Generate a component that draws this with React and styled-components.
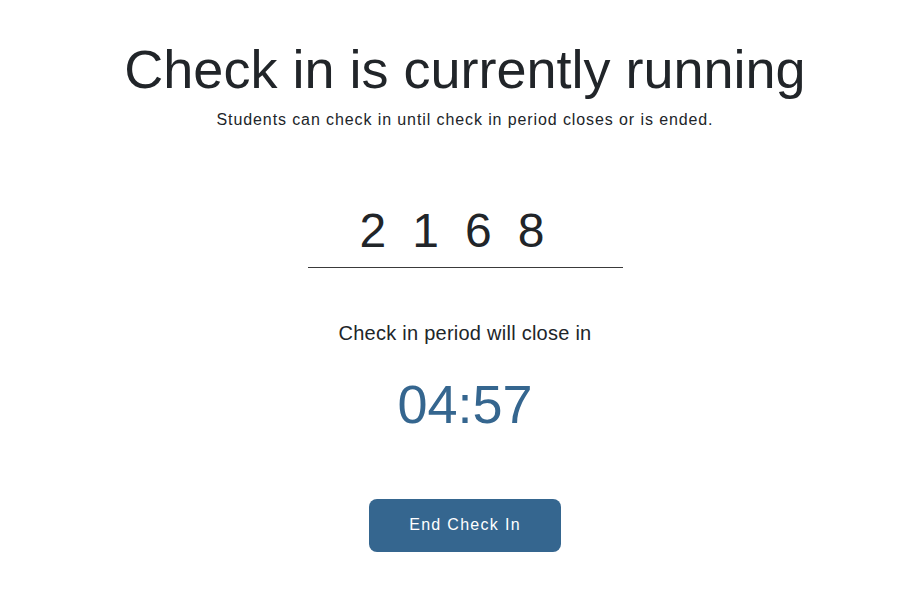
import React from "react";
import styled, { createGlobalStyle } from "styled-components";

const GlobalStyle = createGlobalStyle`
  body {
    margin: 0;
    background: #fff;
    font-family: "Liberation Sans", Arial, sans-serif;
    color: #212529;
  }
`;

const Page = styled.main`
  display: flex;
  flex-direction: column;
  align-items: center;
  padding: 37px 0 0 21px;
  text-align: center;
`;

const Title = styled.h1`
  margin: 0;
  font-size: 54px;
  font-weight: 400;
  line-height: 1.2;
`;

const Subtitle = styled.p`
  margin: 6px 0 0;
  font-size: 16px;
  letter-spacing: 0.9px;
  line-height: 1.5;
`;

const CodeField = styled.div`
  box-sizing: border-box;
  margin-top: 67px;
  width: 315px;
  border-bottom: 1px solid #3a3a3a;
  font-size: 48px;
  letter-spacing: 26px;
  line-height: 1;
  padding: 8px 0 12px;
`;

const Label = styled.p`
  margin: 52px 0 0;
  font-size: 20px;
  letter-spacing: 0.25px;
  line-height: 1.3;
`;

const Timer = styled.div`
  margin-top: 26px;
  font-size: 54px;
  line-height: 1.2;
  color: #35668f;
`;

const Button = styled.button`
  margin-top: 62px;
  width: 192px;
  height: 53px;
  border: none;
  border-radius: 8px;
  background: #35668f;
  color: #fff;
  font-family: inherit;
  font-size: 16px;
  letter-spacing: 1.3px;
  cursor: pointer;
`;

export default function App() {
  return (
    <>
      <GlobalStyle />
      <Page>
        <Title>Check in is currently running</Title>
        <Subtitle>Students can check in until check in period closes or is ended.</Subtitle>
        <CodeField>2168</CodeField>
        <Label>Check in period will close in</Label>
        <Timer>04:57</Timer>
        <Button>End Check In</Button>
      </Page>
    </>
  );
}
